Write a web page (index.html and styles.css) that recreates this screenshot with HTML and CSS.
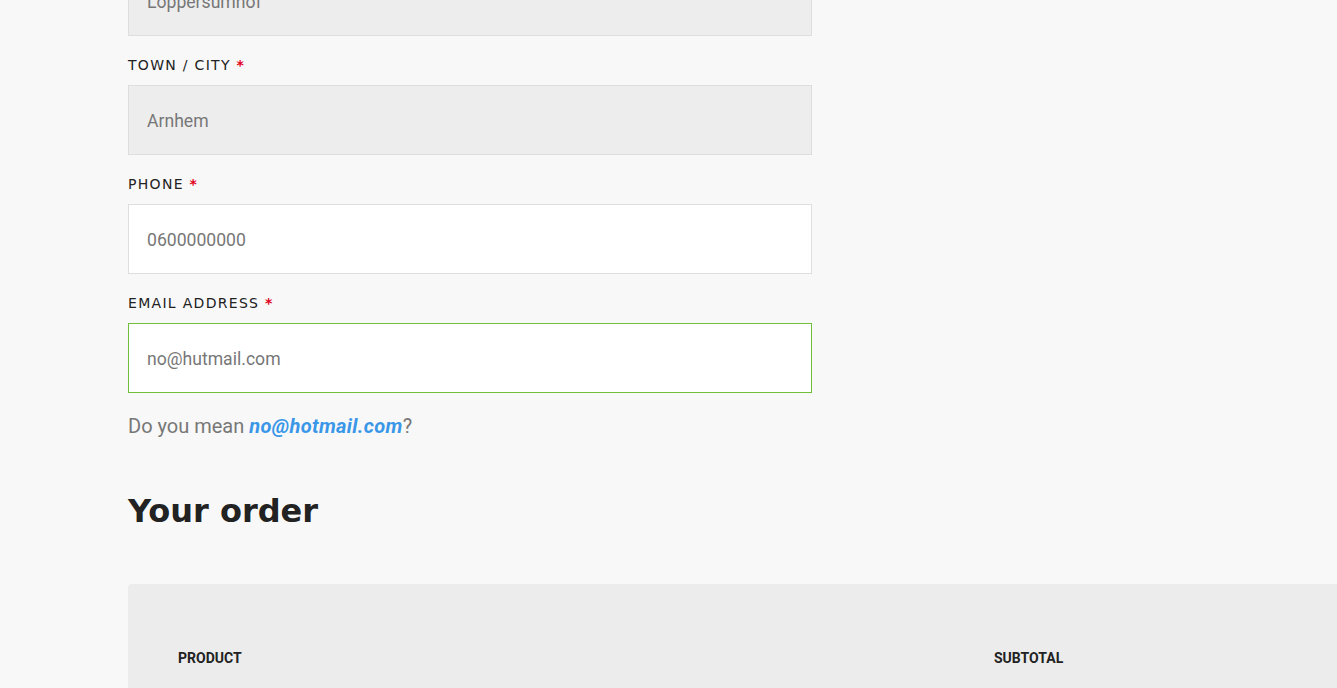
FILE: index.html
```html
<!DOCTYPE html>
<html lang="en">
<head>
<meta charset="utf-8">
<title>Checkout</title>
<link rel="stylesheet" href="styles.css">
</head>
<body>
<main class="page">
  <section class="billing">
    <div class="field field-first">
      <div class="input input-readonly">Loppersumhof</div>
    </div>
    <div class="field">
      <label class="label">Town / City <span class="req">*</span></label>
      <div class="input input-readonly">Arnhem</div>
    </div>
    <div class="field">
      <label class="label">Phone <span class="req">*</span></label>
      <div class="input">0600000000</div>
    </div>
    <div class="field">
      <label class="label">Email address <span class="req">*</span></label>
      <div class="input input-valid">no@hutmail.com</div>
    </div>
    <p class="suggest">Do you mean <a class="suggest-link" href="#">no@hotmail.com</a>?</p>
  </section>
  <h2 class="order-title">Your order</h2>
  <section class="order-box">
    <div class="order-head">
      <div class="col-product">Product</div>
      <div class="col-subtotal">Subtotal</div>
    </div>
  </section>
</main>
</body>
</html>
```
FILE: styles.css
```css
html, body {
  margin: 0;
  padding: 0;
  background: #f8f8f8;
  overflow: hidden;
}
body {
  font-family: Roboto, "Liberation Sans", sans-serif;
  color: #222;
}
.page {
  padding-left: 128px;
}
.billing {
  width: 684px;
  margin-top: -34px;
}
.field {
  margin-bottom: 21px;
}
.label {
  display: block;
  height: 16px;
  line-height: 16px;
  margin-bottom: 12px;
  font-family: "DejaVu Sans", sans-serif;
  font-size: 14px;
  letter-spacing: 1.3px;
  text-transform: uppercase;
  color: #222;
}
.req {
  color: #e2001a;
  font-weight: bold;
}
.input {
  box-sizing: border-box;
  height: 70px;
  border: 1px solid #dedede;
  background: #fff;
  padding: 2px 18px 0;
  display: flex;
  align-items: center;
  font-size: 17.6px;
  color: #777;
}
.input-readonly {
  background: #ededed;
}
.input-valid {
  border-color: #6fbf3b;
}
.suggest {
  margin: -3px 0 0;
  font-size: 20px;
  line-height: 30px;
  color: #777;
}
.suggest-link {
  color: #3a97e8;
  font-weight: bold;
  font-style: italic;
  letter-spacing: 0.35px;
  text-decoration: none;
}
.order-title {
  margin: 48px 0 0;
  font-family: "DejaVu Sans", sans-serif;
  font-weight: bold;
  font-size: 32px;
  line-height: 44px;
  color: #222;
}
.order-box {
  margin-top: 51px;
  width: 1260px;
  height: 200px;
  background: #ececec;
  border-radius: 4px 0 0 0;
}
.order-head {
  display: flex;
  padding: 64px 50px 0;
  font-size: 14px;
  line-height: 20px;
  font-weight: bold;
  text-transform: uppercase;
  color: #222;
}
.col-product {
  width: 816px;
}
```
